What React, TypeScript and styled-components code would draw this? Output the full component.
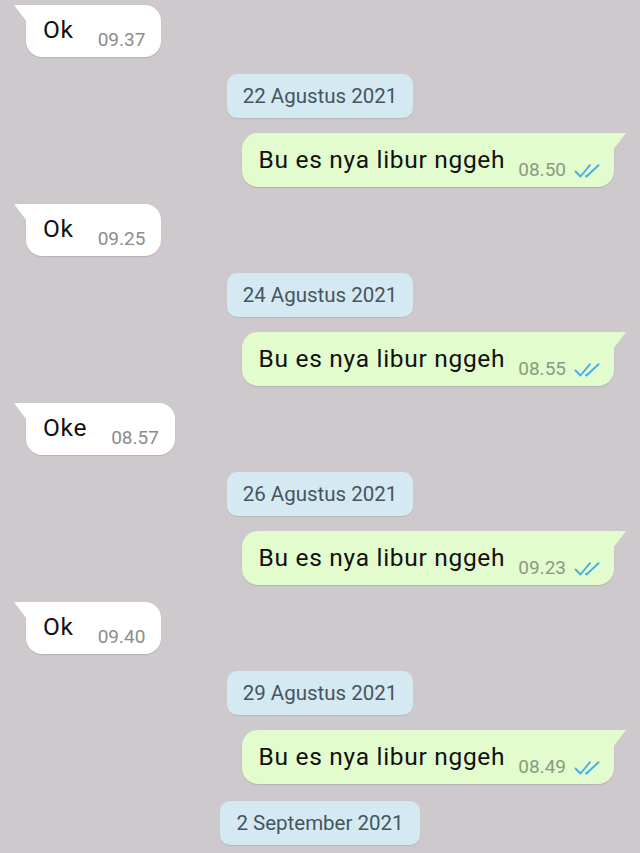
import { Fragment } from "react";
import styled, { createGlobalStyle } from "styled-components";

const GlobalStyle = createGlobalStyle`
  html, body {
    margin: 0;
    padding: 0;
    background: #cec9cd;
  }
  body {
    font-family: Roboto, "Noto Sans", "Liberation Sans", sans-serif;
  }
`;

const Chat = styled.div`
  width: 640px;
  height: 853px;
  overflow: hidden;
  background: #cec9cd;
  display: flex;
  flex-direction: column;
  padding-top: 5px;
  box-sizing: border-box;

  & > * {
    flex-shrink: 0;
  }
`;

// bubble sent by the other person (white, tail on the left)
const Incoming = styled.div`
  position: relative;
  align-self: flex-start;
  margin-left: 26px;
  margin-bottom: 17px;
  display: flex;
  align-items: flex-end;
  height: 52px;
  box-sizing: border-box;
  padding: 0 16px 0 17px;
  background: #ffffff;
  border-radius: 0 16px 16px 16px;
  box-shadow: 0 1px 1px rgba(0, 0, 0, 0.12);

  &::before {
    content: "";
    position: absolute;
    left: -12px;
    top: 0;
    width: 13px;
    height: 17px;
    background: #ffffff;
    clip-path: polygon(0 0, 100% 0, 100% 100%);
    border-top-left-radius: 2px;
  }
`;

// own bubble (green, tail on the right)
const Outgoing = styled(Incoming)`
  align-self: flex-end;
  margin-left: 0;
  margin-right: 26px;
  height: 54px;
  padding: 0 14px 0 17px;
  background: #e3fccd;
  border-radius: 16px 0 16px 16px;

  &::before {
    left: auto;
    right: -12px;
    width: 13px;
    background: #e3fccd;
    clip-path: polygon(0 0, 100% 0, 0 100%);
  }
`;

const Text = styled.span`
  font-size: 24.5px;
  letter-spacing: 0.7px;
  line-height: 32px;
  color: #111;
  margin-bottom: 11px;
  white-space: nowrap;
`;

const Meta = styled.span<{ $out?: boolean }>`
  display: flex;
  align-items: center;
  gap: 8px;
  margin-left: ${(p) => (p.$out ? "13px" : "24px")};
  margin-bottom: 7px;
  font-size: 19px;
  line-height: 20px;
  color: ${(p) => (p.$out ? "#8a9a84" : "#8c8c8c")};
  white-space: nowrap;
`;

const DateRow = styled.div`
  align-self: center;
  margin-bottom: 15px;
  height: 44px;
  box-sizing: border-box;
  padding: 0 16px;
  display: flex;
  align-items: center;
  background: #d5e9f3;
  border-radius: 10px;
  box-shadow: 0 1px 1px rgba(0, 0, 0, 0.1);
  font-size: 20.5px;
  color: #46555e;
  white-space: nowrap;
`;

const Ticks = () => (
  <svg width="26" height="14" viewBox="0 0 26 14" fill="none" style={{ marginTop: 1 }}>
    <path d="M1.5 7.5 L6.5 12.5 L16 1.2" stroke="#45ade8" strokeWidth="1.9" strokeLinecap="round" strokeLinejoin="round" />
    <path d="M12 12 L12.5 12.5 L24.5 1.2" stroke="#45ade8" strokeWidth="1.9" strokeLinecap="round" strokeLinejoin="round" />
  </svg>
);

type Day = { inText: string; inTime: string; date: string; outTime: string };

const days: Day[] = [
  { inText: "Ok", inTime: "09.37", date: "22 Agustus 2021", outTime: "08.50" },
  { inText: "Ok", inTime: "09.25", date: "24 Agustus 2021", outTime: "08.55" },
  { inText: "Oke", inTime: "08.57", date: "26 Agustus 2021", outTime: "09.23" },
  { inText: "Ok", inTime: "09.40", date: "29 Agustus 2021", outTime: "08.49" },
];

export default function App() {
  return (
    <>
      <GlobalStyle />
      <Chat>
        {days.map((d) => (
          <Fragment key={d.date}>
            <Incoming>
              <Text>{d.inText}</Text>
              <Meta>{d.inTime}</Meta>
            </Incoming>
            <DateRow>{d.date}</DateRow>
            <Outgoing>
              <Text>Bu es nya libur nggeh</Text>
              <Meta $out>
                {d.outTime}
                <Ticks />
              </Meta>
            </Outgoing>
          </Fragment>
        ))}
        <DateRow>2 September 2021</DateRow>
      </Chat>
    </>
  );
}
